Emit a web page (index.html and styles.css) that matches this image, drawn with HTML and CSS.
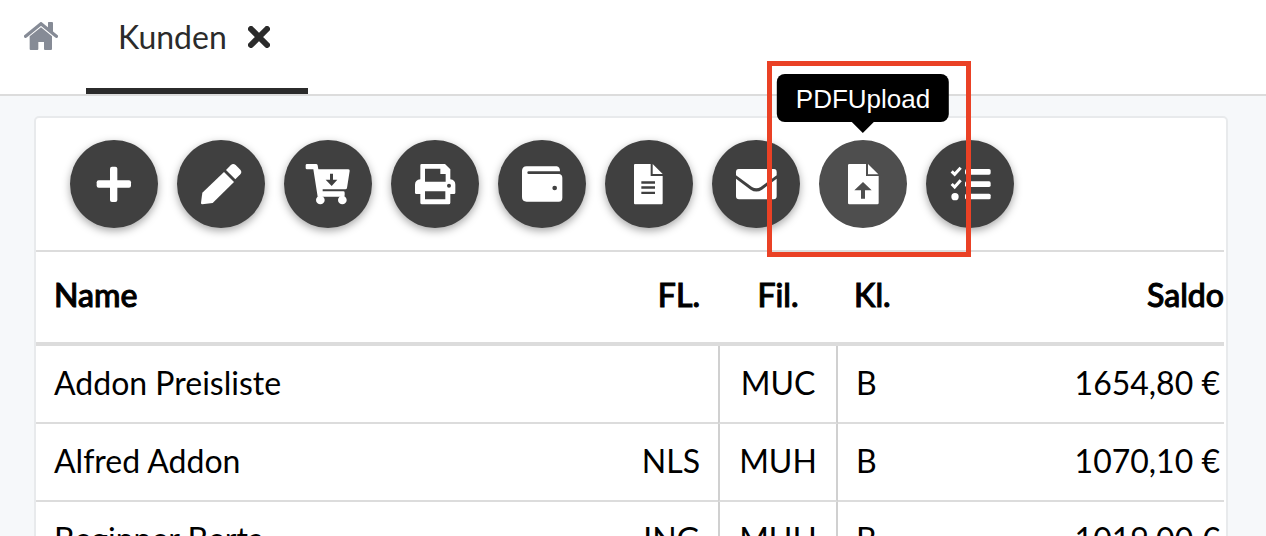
FILE: index.html
```html
<!DOCTYPE html>
<html lang="de">
<head>
<meta charset="utf-8">
<meta name="viewport" content="width=device-width, initial-scale=1">
<title>Kunden</title>
<link rel="stylesheet" href="styles.css">
</head>
<body>
<nav class="tabs">
  <a class="home" href="#" aria-label="Start">
    <svg viewBox="0 0 102 84" width="34" height="28"><path d="M5 43 51 5 97 43" fill="none" stroke="currentColor" stroke-width="10" stroke-linecap="round" stroke-linejoin="round"/><path d="M73 0H84Q87 0 87 3V32L72 20V2Z"/><path d="M51 16 84 43V81Q84 84 81 84H63Q60 84 60 81V60H43V81Q43 84 40 84H20Q17 84 17 81V43Z"/></svg>
  </a>
  <div class="tab">
    <a class="tab-label" href="#">Kunden</a>
    <button class="close" type="button" aria-label="Schließen">
      <svg viewBox="0 0 66 66" width="22" height="22"><path d="M9 9 57 57M57 9 9 57" fill="none" stroke="currentColor" stroke-width="18" stroke-linecap="round"/></svg>
    </button>
  </div>
</nav>
<main class="panel">
  <div class="toolbar">
    <button class="action" type="button" aria-label="Neu"><svg viewBox="0 0 264 264"><rect x="80" y="121" width="103" height="22" rx="6"/><rect x="120" y="80" width="22" height="106" rx="6"/></svg></button>
    <button class="action" type="button" aria-label="Bearbeiten"><svg viewBox="0 0 264 264"><path d="M147 90 161 76Q168 69 176 75L190 89Q196 96 190 103L175 118Z"/><path d="M141 96 171 126 107 189 76 193Q72 193 72 189L76 158Z"/></svg></button>
    <button class="action" type="button" aria-label="Warenkorb"><svg viewBox="0 0 264 264"><path d="M69 72H96Q100 72 101 76L103 88H193Q198 88 197 93L189 144Q188 148 184 148H116V154H178Q182 154 182 158V166Q182 170 178 170H101L88 88H69Q65 88 65 84V76Q65 72 69 72Z"/><circle cx="109" cy="180" r="13"/><circle cx="175" cy="180" r="13"/><path class="cut" d="M138 101H147V119H160L143 138 125 119H138Z"/></svg></button>
    <button class="action" type="button" aria-label="Drucken"><svg viewBox="0 0 264 264"><path fill-rule="evenodd" d="M92 72H162L178 88V118Q193 120 193 134V158Q193 162 189 162H178V188Q178 193 173 193H93Q88 193 88 188V162H76Q72 162 72 158V134Q72 120 88 118V76Q88 72 92 72ZM102 86V125H164V102H148V86ZM102 154V178H163V154ZM174 131A6 6 0 1 0 174 143 6 6 0 1 0 174 131Z"/></svg></button>
    <button class="action" type="button" aria-label="Konto"><svg viewBox="0 0 264 264"><path d="M86 79H176Q186 81 186 94H92Q88 94 88 98T92 102H184Q193 104 193 114V173Q193 185 182 185H86Q72 185 72 171V93Q72 79 86 79Z"/><circle class="cut" cx="170" cy="144" r="7"/></svg></button>
    <button class="action" type="button" aria-label="Dokument"><svg viewBox="0 0 264 264"><path d="M90 72H137V108H173V190Q173 193 170 193H90Q87 193 87 190V75Q87 72 90 72Z"/><path d="M143 72 173 102H143Z"/><path class="cut" d="M109 124H150V131H109ZM109 139H150V146H109ZM109 155H150V162H109Z"/></svg></button>
    <button class="action" type="button" aria-label="E-Mail"><svg viewBox="0 0 264 264"><path d="M80 87H186Q194 87 194 97V106L146 141Q133 149 120 141L72 106V97Q72 87 80 87Z"/><path d="M72 116 116 149Q133 160 150 149L194 116V169Q194 178 185 178H81Q72 178 72 169Z"/></svg></button>
    <div class="marked">
      <button class="action active" type="button" aria-describedby="tip"><svg viewBox="0 0 264 264"><path d="M91 72H141V108H179V189Q179 193 175 193H91Q87 193 87 189V76Q87 72 91 72Z"/><path d="M147 72 178 103H147Z"/><path class="cut" d="M132 126 158 151H138V176H126V151H106Z"/></svg></button>
      <span class="tooltip" id="tip" role="tooltip">PDFUpload</span>
      <span class="frame"></span>
    </div>
    <button class="action" type="button" aria-label="Aufgaben"><svg viewBox="0 0 264 264"><path d="M77 94 86 103 104 83M77 132 86 141 104 121" fill="none" stroke="currentColor" stroke-width="9"/><circle cx="87" cy="170" r="11"/><rect x="117" y="87" width="77" height="17" rx="5"/><rect x="117" y="124" width="77" height="17" rx="5"/><rect x="117" y="161" width="77" height="17" rx="5"/></svg></button>
  </div>
  <table class="customers">
    <colgroup><col><col class="c-fl"><col class="c-fil"><col class="c-kl"><col class="c-saldo"></colgroup>
    <thead>
      <tr><th>Name</th><th class="fl">FL.</th><th class="fil">Fil.</th><th class="kl">Kl.</th><th class="saldo">Saldo</th></tr>
    </thead>
    <tbody>
      <tr><td>Addon Preisliste</td><td class="fl"></td><td class="fil">MUC</td><td class="kl">B</td><td class="saldo">1654,80 €</td></tr>
      <tr><td>Alfred Addon</td><td class="fl">NLS</td><td class="fil">MUH</td><td class="kl">B</td><td class="saldo">1070,10 €</td></tr>
      <tr><td>Beginner Berta</td><td class="fl">ING</td><td class="fil">MUH</td><td class="kl">B</td><td class="saldo">1019,00 €</td></tr>
    </tbody>
  </table>
</main>
</body>
</html>
```

FILE: styles.css
```css
* { box-sizing: border-box; }

body {
  margin: 0;
  height: 100vh;
  overflow: hidden;
  background: #f6f8fa;
  color: #000;
  font-family: Lato, "Noto Sans", sans-serif;
  font-size: 32px;
  line-height: 40px;
}

svg { display: block; fill: currentColor; }
a { color: inherit; text-decoration: none; }
button { border: 0; padding: 0; background: none; color: inherit; font: inherit; cursor: pointer; }

.tabs {
  display: flex;
  background: #fff;
  border-bottom: 2px solid #dcdcdc;
}
.home { padding: 22px 28px 0 24px; color: #868b96; }
.tab {
  display: flex;
  align-items: center;
  gap: 21px;
  padding: 17px 38px 31px 32px;
  border-bottom: 6px solid #2b2b2b;
  color: #2b2b2b;
}

.panel {
  margin: 20px 38px 0 34px;
  background: #fff;
  border: 2px solid #e8eaec;
  border-radius: 5px;
  padding-right: 2px;
}

.toolbar {
  display: flex;
  gap: 19px;
  padding: 22px 34px;
  border-bottom: 2px solid #dcdcdc;
}
.action {
  flex: none;
  width: 88px;
  height: 88px;
  border-radius: 50%;
  background: #404040;
  color: #fff;
  box-shadow: 0 3px 8px rgba(0, 0, 0, 0.35);
}
.action.active { background: #4e4e4e; box-shadow: none; }
.cut { fill: #404040; }
.active .cut { fill: #4e4e4e; }

.marked { position: relative; height: 88px; z-index: 1; }
.tooltip {
  position: absolute;
  bottom: 106px;
  left: 50%;
  transform: translateX(-50%);
  padding: 9px 19px 7px;
  border-radius: 8px;
  background: #000;
  color: #fff;
  font-family: "Liberation Sans", Arial, sans-serif;
  font-size: 26px;
  line-height: 32px;
}
.tooltip::after {
  content: "";
  position: absolute;
  top: 100%;
  left: 50%;
  margin-left: -11px;
  border: 11px solid transparent;
  border-top-color: #000;
  border-bottom: 0;
}
.frame {
  position: absolute;
  inset: -79px -64px -29px -52px;
  border: 5px solid #ea4125;
  pointer-events: none;
}

.customers { width: 100%; table-layout: fixed; border-collapse: separate; border-spacing: 0; }
.c-fl { width: 120px; }
.c-fil { width: 120px; }
.c-kl { width: 120px; }
.c-saldo { width: 266px; }
th {
  padding: 23px 18px 27px;
  border-bottom: 4px solid #dcdcdc;
  font-weight: 500;
  text-align: left;
  -webkit-text-stroke: 1px #000;
}
td { padding: 17px 18px 19px; border-bottom: 2px solid #dcdcdc; }
.fl { text-align: right; }
.fil { text-align: center; }
td.fil { border-left: 2px solid #d0d0d0; border-right: 2px solid #d0d0d0; padding-left: 0; padding-right: 0; }
td.saldo { text-align: right; padding-right: 4px; }
th.saldo { text-align: right; padding-right: 0; }
th.kl { padding-left: 16px; }
```
